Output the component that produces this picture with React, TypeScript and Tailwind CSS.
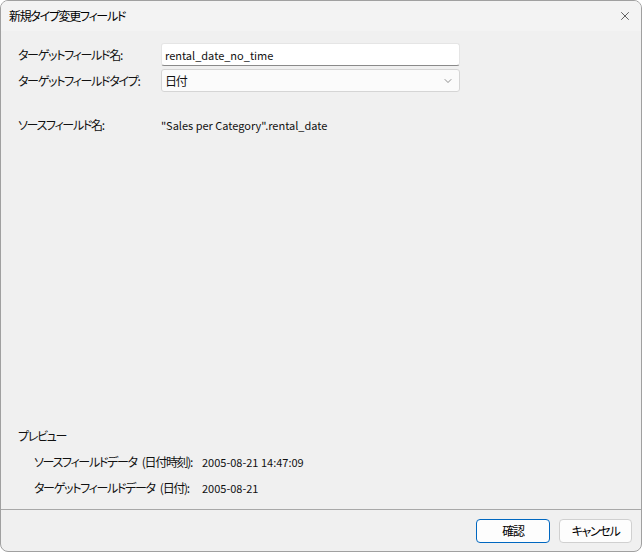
import { ChevronDown, X } from "lucide-react";

const FONT = "font-['Noto_Sans_CJK_JP',sans-serif] [font-feature-settings:'palt']";
const LATIN = "text-[11px] tracking-normal";

function Row({ label, children }: { label: string; children: React.ReactNode }) {
  return (
    <div className="flex items-center">
      <span className="w-[143px] shrink-0 whitespace-nowrap">{label}</span>
      {children}
    </div>
  );
}

function PreviewRow({ label, kind, value }: { label: string; kind: string; value: string }) {
  return (
    <div className="flex items-center">
      <span className="w-[168px] whitespace-nowrap">
        {label}
        <span className="ml-[5px]">({kind}):</span>
      </span>
      <span className={LATIN}>{value}</span>
    </div>
  );
}

export default function App() {
  return (
    <div
      className={`${FONT} w-[642px] h-[552px] flex flex-col bg-[#f0f0f0] border border-[#a0a0a0] rounded-[8px] overflow-hidden text-[12px] leading-[16px] tracking-[-1.3px] text-[#111]`}
    >
      {/* title bar */}
      <div className="h-[30px] shrink-0 flex items-center justify-between bg-[#f3f3f3] pl-[8px] pr-[9px]">
        <span className="text-[12px] text-black">新規タイプ変更フィールド</span>
        <X className="w-[14px] h-[14px] text-[#222]" strokeWidth={1.2} />
      </div>

      {/* body */}
      <div className="flex-1 flex flex-col pl-[17px] pr-[181px] pt-[12px]">
        <Row label="ターゲットフィールド名:">
          <div className={`flex-1 h-[23px] bg-white border border-[#e5e5e5] border-b-[#8a8a8a] rounded-[3px] flex items-center px-[3px] ${LATIN}`}>
            rental_date_no_time
          </div>
        </Row>
        <div className="h-[3px]" />
        <Row label="ターゲットフィールドタイプ:">
          <div className="flex-1 h-[23px] bg-[#fbfbfb] border border-[#d5d5d5] rounded-[3px] flex items-center justify-between px-[3px]">
            <span>日付</span>
            <ChevronDown className="w-[12px] h-[12px] text-[#555] mr-[2px]" strokeWidth={1.3} />
          </div>
        </Row>
        <div className="mt-[25px]">
          <Row label="ソースフィールド名:">
            <span className={LATIN}>"Sales per Category".rental_date</span>
          </Row>
        </div>

        <div className="flex-1" />

        <div className="pb-[13px]">
          <div className="mb-[10px]">プレビュー</div>
          <div className="pl-[16px] flex flex-col gap-[10px]">
            <PreviewRow label="ソースフィールドデータ" kind="日付時刻" value="2005-08-21 14:47:09" />
            <PreviewRow label="ターゲットフィールドデータ" kind="日付" value="2005-08-21" />
          </div>
        </div>
      </div>

      {/* footer */}
      <div className="h-[42px] shrink-0 border-t border-[#a8a8a8] flex items-center justify-end gap-[9px] pr-[9px]">
        <button className="w-[74px] h-[24px] bg-[#fdfdfd] border border-[#0067c0] rounded-[4px] text-[12px] text-black">
          確認
        </button>
        <button className="w-[73px] h-[24px] bg-[#fdfdfd] border border-[#d0d0d0] rounded-[4px] text-[12px] text-black">
          キャンセル
        </button>
      </div>
    </div>
  );
}
